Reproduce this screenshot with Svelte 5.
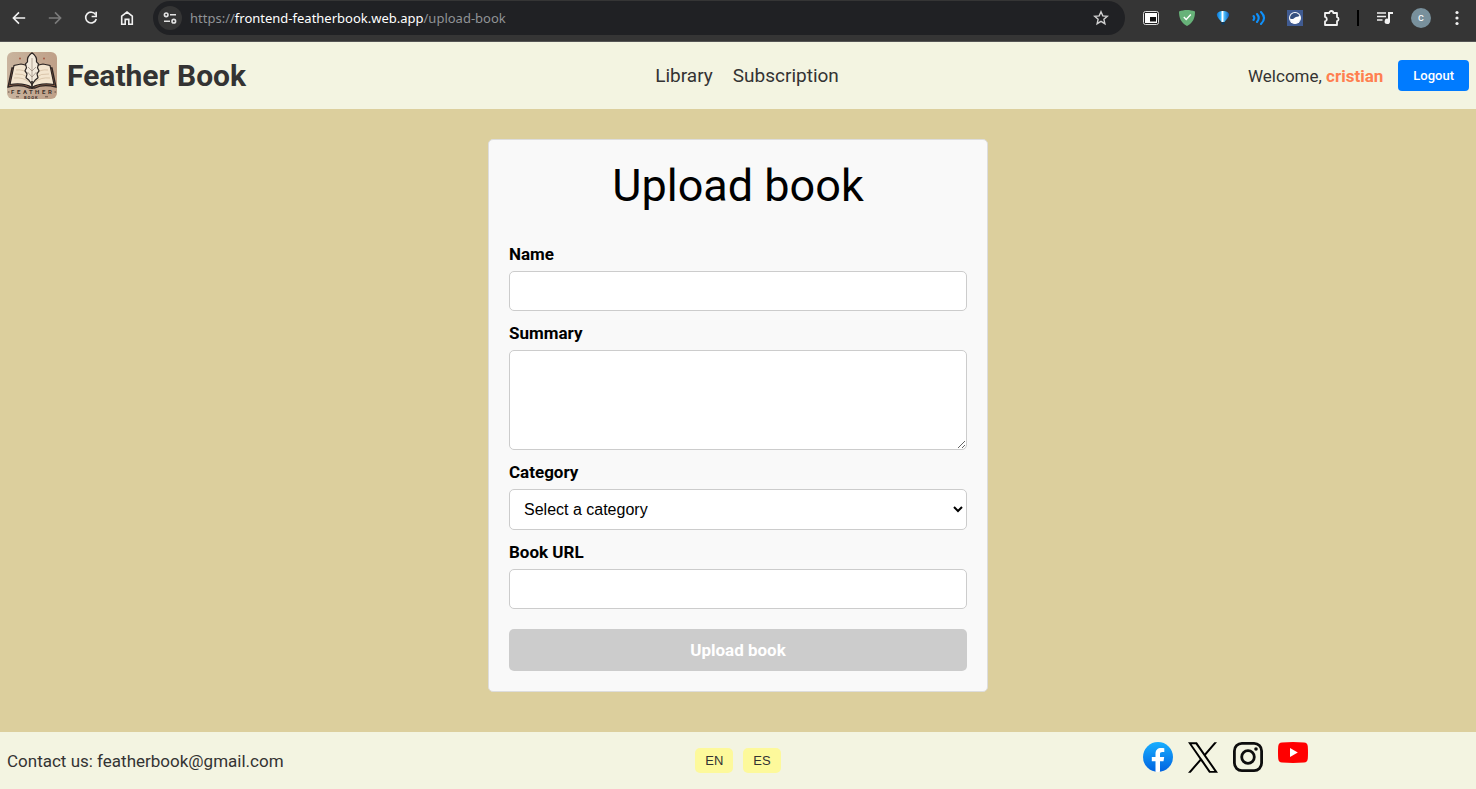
<script>
  let name = $state('');
  let summary = $state('');
  let category = $state('');
  let url = $state('');

  const categories = ['Fiction', 'Science', 'History'];
  const ready = $derived(Boolean(name && summary && category && url));
</script>

<div class="page">
  <div class="browser" role="toolbar" aria-label="Browser">
    <div class="cells">
      <button class="cell" aria-label="Back">
        <svg width="16" height="16" viewBox="0 0 16 16" fill="none" stroke="#f1f1f1" stroke-width="1.6"><path d="M14.2 8H2.8M8 2.4 2.4 8 8 13.6" /></svg>
      </button>
      <button class="cell" aria-label="Forward">
        <svg width="16" height="16" viewBox="0 0 16 16" fill="none" stroke="#7b7b7b" stroke-width="1.6"><path d="M1.8 8h11.4M8 2.4 13.6 8 8 13.6" /></svg>
      </button>
      <button class="cell" aria-label="Reload">
        <svg width="16" height="16" viewBox="0 0 16 16"><path d="M12.6 4.6A5.4 5.4 0 1 0 13.3 9" fill="none" stroke="#f1f1f1" stroke-width="1.6" /><path d="M14 1.8v5.4H8.6V5.7h3.7V1.8z" fill="#f1f1f1" /></svg>
      </button>
      <button class="cell" aria-label="Home">
        <svg width="16" height="16" viewBox="0 0 16 16" fill="none" stroke="#f1f1f1" stroke-width="1.6"><path d="M2.7 6.2 8 2l5.3 4.2v8H9.8V9.4H6.2v4.8H2.700z" /></svg>
      </button>
    </div>
    <div class="address">
      <button class="site" aria-label="Site information">
        <svg width="14" height="12" viewBox="0 0 14 12" fill="none" stroke="#e3e3e3" stroke-width="1.6"><circle cx="3.2" cy="2.8" r="1.8" /><path d="M7 2.8h6M1 9.2h6" /><circle cx="10.8" cy="9.2" r="1.8" /></svg>
      </button>
      <span class="url">https://<b>frontend-featherbook.web.app</b>/upload-book</span>
      <button class="cell" aria-label="Bookmark">
        <svg width="16" height="16" viewBox="0 0 16 16" fill="none" stroke="#d0d0d0" stroke-width="1.4"><path d="m8 1.8 1.8 4.1 4.5.4-3.4 3 1 4.4L8 11.4l-3.9 2.3 1-4.4-3.4-3 4.500-.4z" /></svg>
      </button>
    </div>
    <div class="cells">
      <button class="cell" aria-label="Picture in picture">
        <svg width="16" height="14" viewBox="0 0 16 14"><rect x=".5" y=".5" width="15" height="13" rx="2" fill="#222" stroke="#ddd" /><rect x="2" y="2" width="12" height="10" fill="#fff" /><rect x="7" y="6" width="6" height="4.5" fill="#111" /></svg>
      </button>
      <button class="cell" aria-label="Ad blocker">
        <svg width="16" height="16" viewBox="0 0 16 16"><path d="M8 0c2.8 0 5.500.5 8 1.500 0 6.500-1.800 11-8 14.500C1.800 12.500 0 8 0 1.500 2.500.5 5.200 0 8 0z" fill="#67b279" /><path d="m4.800 7 2.400 2.400L11.800 4.500" fill="none" stroke="#fff" stroke-width="1.400" /></svg>
      </button>
      <button class="cell" aria-label="Balloon">
        <svg width="14" height="16" viewBox="0 0 14 16"><defs><linearGradient id="balloon"><stop stop-color="#0b6fd0" /><stop offset=".3" stop-color="#36b4fa" /><stop offset=".46" stop-color="#fff" /><stop offset=".6" stop-color="#4bbcfa" /><stop offset="1" stop-color="#0a58b4" /></linearGradient></defs><path d="M.8 4.800C.8 2.500 4 1 7 1s6.200 1.500 6.200 3.800c0 2.400-3.200 4.900-4.700 7.100h-3C4 9.700.8 7.200.8 4.800z" fill="url(#balloon)" /><path d="M5.600 12.200h2.800v2.400H5.600z" fill="#0a3c66" /></svg>
      </button>
      <button class="cell" aria-label="Read aloud">
        <svg width="14" height="16" viewBox="0 0 14 16" fill="none" stroke="#0f90fa" stroke-width="2.100" stroke-linecap="round"><path d="M1.500 6q1.500 2 0 4M5 4q3.400 4 0 8M9 2q6 6 0 12" /></svg>
      </button>
      <button class="cell" aria-label="Extension">
        <svg width="16" height="16" viewBox="0 0 16 16"><path d="M0 0h16v16H0z" fill="#405b91" /><circle cx="8" cy="8" r="6" fill="#fff" /><circle cx="8" cy="8" r="5" fill="#35507f" /><path d="M3 8.500c2.500 1.200 3.500.2 4.700-.8C9.300 6.300 11 7.300 12.700 5.500 14.500 9 12 13.500 8 13.500 5 13.500 3 11 3 8.500z" fill="#fff" /></svg>
      </button>
      <button class="cell" aria-label="Extensions">
        <svg width="18" height="18" viewBox="0 0 18 18" fill="none" stroke="#f1f1f1" stroke-width="1.800" stroke-linejoin="round"><path d="M3 4h4.300a2 2 0 0 1 4 0H15v4.200a2 2 0 0 1 0 3.900V16H3v-3.600a2.300 2.300 0 0 0 0-4.500z" /></svg>
      </button>
      <span class="divider"></span>
      <button class="cell" aria-label="Media">
        <svg width="16" height="14" viewBox="0 0 16 14"><path d="M0 2h9M0 5.500h9M0 9h5.500" fill="none" stroke="#f1f1f1" stroke-width="1.700" /><path d="M11 1h5v2h-3v7.200a2.700 2.700 0 1 1-2-2.500z" fill="#f1f1f1" /></svg>
      </button>
      <button class="cell" aria-label="Profile"><span class="avatar">c</span></button>
      <button class="cell" aria-label="Menu">
        <svg width="4" height="16" viewBox="0 0 4 16" fill="#f1f1f1"><circle cx="2" cy="2.500" r="1.600" /><circle cx="2" cy="8" r="1.600" /><circle cx="2" cy="13.500" r="1.600" /></svg>
      </button>
    </div>
  </div>

  <header>
    <a class="brand" href="#home">
      <svg width="50" height="47" viewBox="0 0 50 47" aria-hidden="true">
        <defs><linearGradient id="cover"><stop stop-color="#c9b49e" /><stop offset="1" stop-color="#bfa088" /></linearGradient></defs>
        <rect width="50" height="47" rx="6" fill="url(#cover)" />
        <circle cx="13" cy="6.500" r=".9" fill="#a5523c" /><circle cx="37" cy="6.500" r=".9" fill="#a5523c" />
        <path d="m5 16-4 19q13-3 21 1h6q8-4 21-1l-4-19z" fill="#9a6549" stroke="#2c2523" stroke-width="1.300" />
        <path d="M7 13.500 3 32.500q14-2 22 3 8-5 22-3l-4-19-7-1.500q-7 1-11 5-4-4-11-5z" fill="#f3e5cf" stroke="#2c2523" stroke-width="1.200" />
        <path d="M9 18q8-1 12 4M8 22q8-1 14 4M7 26q9-1 15 4M41 18q-8-1-12 4M42 22q-8-1-14 4M43 26q-9-1-15 4" fill="none" stroke="#c9b092" stroke-width=".6" />
        <path d="M25 .8q-5.500 4-4.500 9l-2 2 1 4-1.500 3 2 3-1 4 3 2.500 3 4 3-4 3-2.500-1-4 2-3-1.500-3 1-4-2-2q1-5-4.500-9z" fill="#f3eadc" stroke="#2c2523" stroke-width="1.200" stroke-linejoin="round" />
        <path d="M25 6v29M21 15l4 4 4-4M20.500 20l4.500 5 4.500-5" fill="none" stroke="#86756a" stroke-width=".6" />
        <path d="M25 29v8" stroke="#2c2523" stroke-width="1.600" />
        <g class="mark"><text x="4" y="42">F</text><text x="10" y="42">E</text><text x="16" y="42">A</text><text x="22" y="42">T</text><text x="28" y="42">H</text><text x="35" y="42">E</text><text x="41" y="42">R</text></g>
        <text class="submark" x="17" y="46.500">B O O K</text>
        <path d="M1 40h1.500M47.500 40H49M9 44.800h3M38 44.800h3" stroke="#4b3b33" stroke-width=".8" />
      </svg>
      <span>Feather Book</span>
    </a>
    <nav>
      <a href="#library">Library</a>
      <a href="#subscription">Subscription</a>
    </nav>
    <div class="account">
      <span>Welcome, <strong>cristian</strong></span>
      <button class="logout">Logout</button>
    </div>
  </header>

  <main>
    <form onsubmit={(e) => e.preventDefault()}>
      <h1>Upload book</h1>
      <label for="name">Name</label>
      <input id="name" type="text" bind:value={name} />
      <label for="summary">Summary</label>
      <textarea id="summary" bind:value={summary}></textarea>
      <label for="category">Category</label>
      <select id="category" bind:value={category}>
        <option value="" disabled>Select a category</option>
        {#each categories as item}
          <option value={item}>{item}</option>
        {/each}
      </select>
      <label for="url">Book URL</label>
      <input id="url" type="text" bind:value={url} />
      <button class="submit" disabled={!ready}>Upload book</button>
    </form>
  </main>

  <footer>
    <span>Contact us: featherbook@gmail.com</span>
    <div class="languages">
      <button>EN</button>
      <button>ES</button>
    </div>
    <div class="social">
      <a href="#facebook" aria-label="Facebook">
        <svg width="30" height="30" viewBox="0 0 30 30"><defs><linearGradient id="fb" x2="0" y2="1"><stop stop-color="#19afff" /><stop offset="1" stop-color="#0062e0" /></linearGradient></defs><circle cx="15" cy="15" r="15" fill="url(#fb)" /><path d="M12.500 29.800V19.300H8.800V15h3.700v-3.300c0-3.800 2.200-5.800 5.600-5.800 1.200 0 2.400.1 3.200.3v3.700h-1.900c-1.900 0-2.400.9-2.400 2.200V15h4.200l-.7 4.300H17v10.500a15 15 0 0 1-4.500 0z" fill="#fff" /></svg>
      </a>
      <a href="#x" aria-label="X">
        <svg width="30" height="31" viewBox="0 0 1200 1227"><path d="M714.163 519.284 1160.890 0h-105.860L667.137 450.887 357.328 0H0l468.492 681.821L0 1226.370h105.866l409.625-476.152 327.181 476.152H1200L714.137 519.284h.026ZM569.165 687.828l-47.468-67.894-377.686-540.240h162.604l304.797 435.991 47.468 67.894 396.200 566.721H892.476L569.165 687.854v-.026Z" /></svg>
      </a>
      <a href="#instagram" aria-label="Instagram">
        <svg width="30" height="30" viewBox="0 0 30 30" fill="none" stroke="#0d0d0d" stroke-width="2.800"><rect x="1.400" y="1.400" width="27.200" height="27.200" rx="7.500" /><circle cx="15" cy="15" r="6.300" /><circle cx="23" cy="7" r="1.800" fill="#0d0d0d" stroke="none" /></svg>
      </a>
      <a href="#youtube" aria-label="YouTube">
        <svg width="30" height="21" viewBox="0 0 30 21"><path d="M4 .4Q15-.4 26 .4q3.500.2 3.800 4 .4 6 0 12.200-.3 3.800-3.800 4-11 .8-22 0-3.500-.2-3.800-4-.4-6.200 0-12.200Q.5.6 4 .4z" fill="red" /><path d="m12 6 7.800 4.500L12 15z" fill="#fff" /></svg>
      </a>
    </div>
  </footer>
</div>

<style>
  :global(body) {
    margin: 0;
  }

  .page {
    display: flex;
    flex-direction: column;
    min-height: 100vh;
    background: #dccf9d;
    color: #333;
    font-family: Roboto, sans-serif;
    font-size: 17px;
    line-height: 24px;
  }

  button,
  input,
  textarea,
  select {
    box-sizing: border-box;
    margin: 0;
    font-family: inherit;
  }

  button {
    padding: 0;
    border: 0;
    cursor: pointer;
  }

  a {
    color: inherit;
    text-decoration: none;
  }

  svg {
    display: block;
  }

  .browser {
    display: flex;
    gap: 8px;
    padding: 1px 1px 6px;
    border-bottom: 1px solid #555;
    background: #353535;
  }

  .cells {
    display: flex;
    align-items: center;
  }

  .cell {
    display: flex;
    align-items: center;
    justify-content: center;
    width: 36px;
    height: 34px;
    background: none;
  }

  .address {
    display: flex;
    flex: 1;
    align-items: center;
    gap: 8px;
    padding-left: 5px;
    padding-right: 6px;
    border-radius: 17px;
    background: #202124;
  }

  .site {
    display: flex;
    align-items: center;
    justify-content: center;
    width: 24px;
    height: 24px;
    border-radius: 50%;
    background: #353535;
  }

  .url {
    flex: 1;
    color: #909396;
    font-family: "Noto Sans", sans-serif;
    font-size: 13px;
  }

  .url b {
    color: #fff;
    font-weight: 400;
  }

  .divider {
    width: 2px;
    height: 16px;
    margin: 0 8px;
    background: #000;
  }

  .avatar {
    width: 20px;
    height: 20px;
    border-radius: 50%;
    background: #78909c;
    color: #fff;
    font-size: 11px;
    line-height: 20px;
  }

  header {
    display: flex;
    align-items: center;
    justify-content: space-between;
    padding: 10px 7px;
    background: #f3f4e1;
  }

  .brand {
    display: flex;
    align-items: center;
    gap: 10px;
    font-size: 30px;
    font-weight: 700;
  }

  .mark {
    fill: #3d302b;
    font-size: 6px;
    font-weight: 700;
  }

  .submark {
    fill: #3d302b;
    font-size: 4px;
    font-weight: 700;
  }

  nav {
    display: flex;
    gap: 20px;
    font-size: 19px;
  }

  .account {
    display: flex;
    align-items: center;
    gap: 15px;
  }

  .account strong {
    color: #ff7f50;
  }

  .logout {
    padding: 8px 15px;
    border-radius: 4px;
    background: #007bff;
    color: #fff;
    font-size: 13px;
    font-weight: 500;
    line-height: 15px;
  }

  main {
    display: flex;
    flex: 1;
    align-items: flex-start;
    justify-content: center;
    padding: 30px 20px 40px;
  }

  form {
    display: flex;
    flex-direction: column;
    box-sizing: border-box;
    width: 100%;
    max-width: 500px;
    padding: 20px;
    border: 1px solid #ddd;
    border-radius: 5px;
    background: #f9f9f9;
    color: #000;
  }

  h1 {
    margin: 0 0 20px;
    font-size: 45px;
    font-weight: 400;
    line-height: 52px;
    text-align: center;
  }

  label {
    margin: 10px 0 5px;
    font-weight: 700;
  }

  input,
  textarea,
  select {
    width: 100%;
    height: 40px;
    padding: 10px;
    border: 1px solid #ccc;
    border-radius: 5px;
    background: #fff;
    color: #000;
    font-family: "Liberation Sans", sans-serif;
    font-size: 16px;
  }

  textarea {
    height: 100px;
    resize: vertical;
  }

  select {
    height: 41px;
  }

  .submit {
    height: 42px;
    margin-top: 20px;
    border-radius: 5px;
    background: #007bff;
    color: #fff;
    font-size: 17px;
    font-weight: 700;
  }

  .submit:disabled {
    background: #ccc;
    cursor: default;
  }

  footer {
    display: grid;
    grid-template-columns: repeat(3, 1fr);
    align-items: center;
    padding: 10px 7px;
    background: #f3f4e1;
  }

  .languages {
    display: flex;
    justify-content: center;
    gap: 10px;
  }

  .languages button {
    padding: 5px 10px;
    border-radius: 5px;
    background: #fdf99b;
    color: #333;
    font-family: "Liberation Sans", sans-serif;
    font-size: 13px;
    line-height: 15px;
  }

  .social {
    display: flex;
    align-items: flex-start;
    justify-content: center;
    gap: 15px;
    padding-bottom: 6px;
  }
</style>
